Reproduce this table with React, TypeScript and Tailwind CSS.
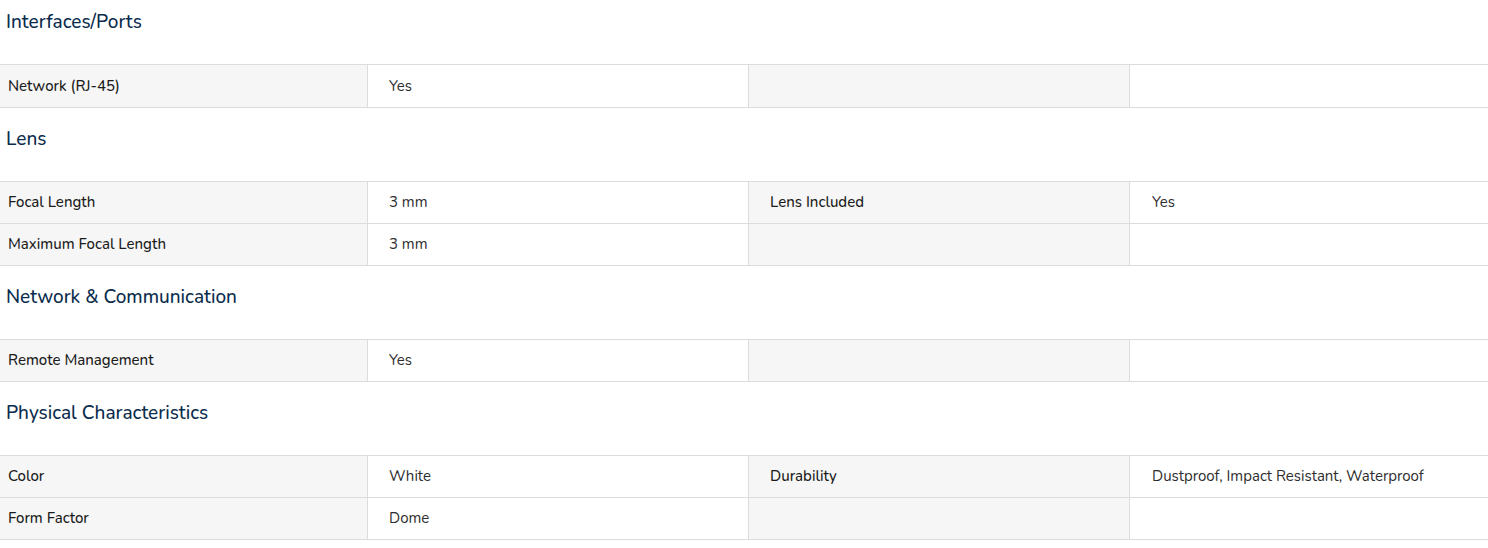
import React from 'react';

type Row = [string, string, string?, string?];

type Section = {
  title: string;
  rows: Row[];
};

const sections: Section[] = [
  { title: 'Interfaces/Ports', rows: [['Network (RJ-45)', 'Yes']] },
  {
    title: 'Lens',
    rows: [
      ['Focal Length', '3 mm', 'Lens Included', 'Yes'],
      ['Maximum Focal Length', '3 mm'],
    ],
  },
  { title: 'Network & Communication', rows: [['Remote Management', 'Yes']] },
  {
    title: 'Physical Characteristics',
    rows: [
      ['Color', 'White', 'Durability', 'Dustproof, Impact Resistant, Waterproof'],
      ['Form Factor', 'Dome'],
    ],
  },
];

function SpecRow({ row, first }: { row: Row; first?: boolean }) {
  const [label, value, label2, value2] = row;
  return (
    <div
      className={`grid grid-cols-[367px_1px_380px_1px_380px_1px_1fr] border-b border-[#dcdcdc] text-[15px] ${
        first ? 'h-[43px]' : 'h-[42px]'
      }`}
    >
      <div className="flex items-center bg-[#f6f6f6] pl-[8px] font-medium text-[#1c1c1c]">{label}</div>
      <div className="bg-[#dcdcdc]" />
      <div className="flex items-center bg-white pl-[21px] text-[#2e2e2e]">{value}</div>
      <div className="bg-[#dcdcdc]" />
      <div className="flex items-center bg-[#f6f6f6] pl-[21px] font-medium text-[#1c1c1c]">{label2 ?? ''}</div>
      <div className="bg-[#dcdcdc]" />
      <div className="flex items-center bg-white pl-[22px] text-[#2e2e2e]">{value2 ?? ''}</div>
    </div>
  );
}

export default function App() {
  return (
    <div className="w-[1488px] h-[548px] overflow-hidden bg-white font-['Nunito','Open_Sans',sans-serif]">
      {sections.map((section, i) => (
        <section key={section.title}>
          <div className={`flex items-start pl-[6px] ${i === 0 ? 'h-[64px] pt-[10px]' : 'h-[73px] pt-[19px]'}`}>
            <h2 className="text-[19px] leading-[24px] font-medium text-[#0b2c4d]">{section.title}</h2>
          </div>
          <div className="border-t border-[#dcdcdc]">
            {section.rows.map((row, j) => (
              <SpecRow key={j} row={row} first={i === 0} />
            ))}
          </div>
        </section>
      ))}
    </div>
  );
}
